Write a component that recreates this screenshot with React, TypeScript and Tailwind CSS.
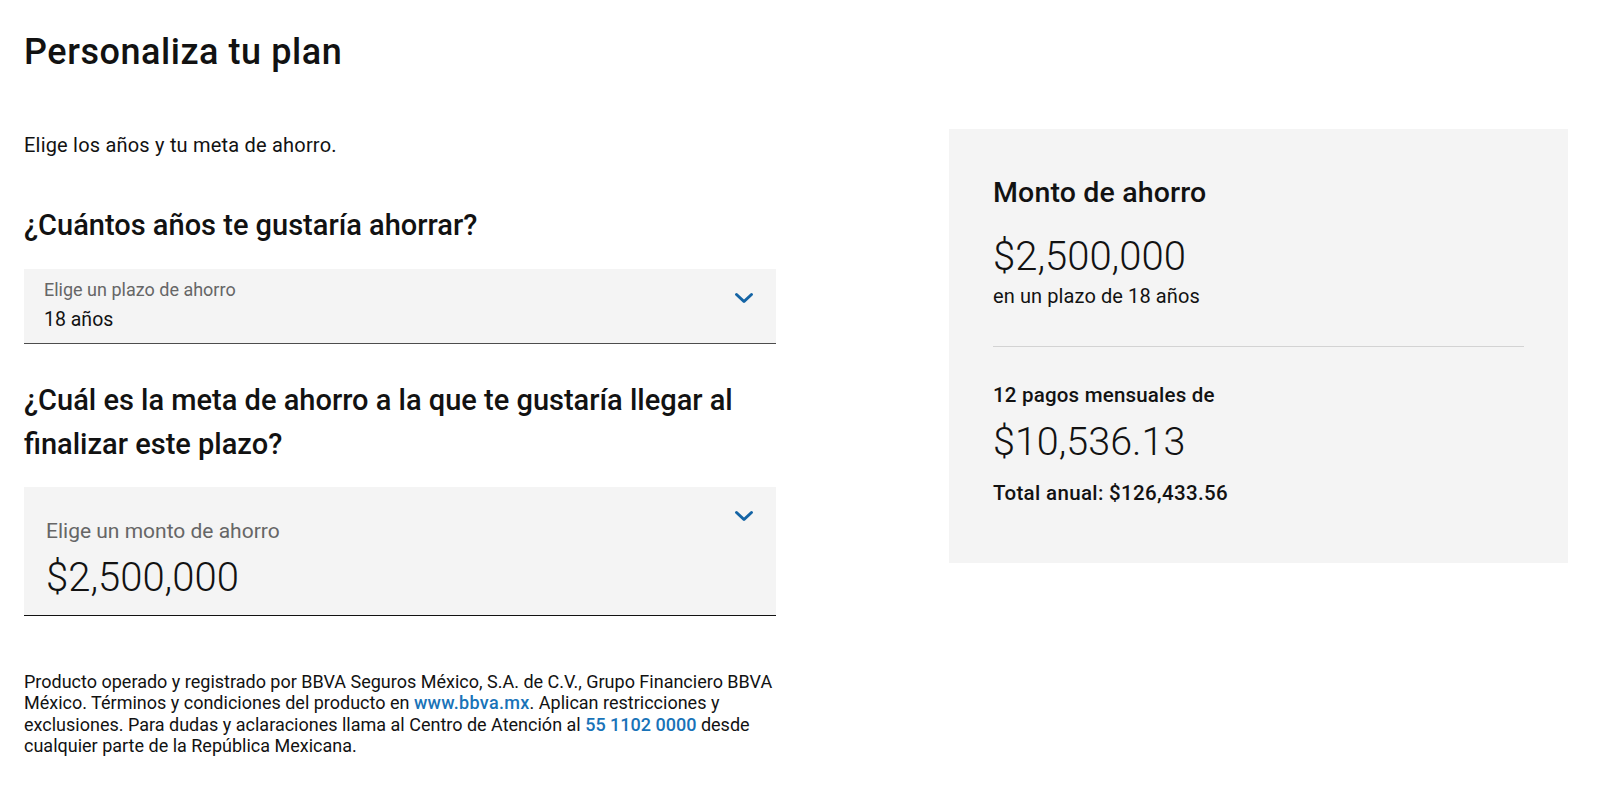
import React from "react";

function Chevron() {
  return (
    <svg width="20" height="12" viewBox="0 0 20 12" fill="none" className="mt-[23px] shrink-0">
      <path d="M2.5 2.5 L10 9.5 L17.5 2.5" stroke="#1464a5" strokeWidth="3" strokeLinecap="round" strokeLinejoin="round" />
    </svg>
  );
}

export default function App() {
  return (
    <div className="w-[1600px] min-h-[794px] bg-white text-[#121212] font-['Roboto','Liberation_Sans',sans-serif]">
      <div className="pl-6 pt-[30px]">
        <h1 className="text-[36px] leading-[44px] font-medium tracking-[0.55px]">Personaliza tu plan</h1>
      </div>

      <div className="mt-[55px] flex pl-6 pr-8 gap-[173px] items-start">
        {/* Left column */}
        <div className="w-[752px] pt-1">
          <p className="text-[20px] leading-[24px] tracking-[0.2px]">Elige los años y tu meta de ahorro.</p>

          <h2 className="mt-[50px] text-[29px] leading-[36px] font-medium">¿Cuántos años te gustaría ahorrar?</h2>

          <div className="mt-[26px] flex justify-between bg-[#f4f4f4] border-b border-[#4d4d4d] pl-5 pr-[22px]">
            <div className="pt-[10px] pb-[11px]">
              <div className="text-[18px] leading-[22px] text-[#666666]">Elige un plazo de ahorro</div>
              <div className="mt-[7px] text-[19.5px] leading-[24px]">18 años</div>
            </div>
            <Chevron />
          </div>

          <h2 className="mt-[34px] text-[29px] leading-[44px] font-medium">
            ¿Cuál es la meta de ahorro a la que te gustaría llegar al finalizar este plazo?
          </h2>

          <div className="mt-[21px] flex justify-between bg-[#f4f4f4] border-b border-[#121212] pl-[22px] pr-[22px]">
            <div className="pt-[32px] pb-[14px]">
              <div className="text-[21px] leading-[24px] text-[#666666]">Elige un monto de ahorro</div>
              <div className="mt-[12px] text-[40px] leading-[46px] font-light">$2,500,000</div>
            </div>
            <Chevron />
          </div>

          <p className="mt-[55px] text-[18px] leading-[21.33px] whitespace-nowrap">
            Producto operado y registrado por BBVA Seguros México, S.A. de C.V., Grupo Financiero BBVA
            <br />
            México. Términos y condiciones del producto en{" "}
            <a className="text-[#1973b8] font-medium tracking-[0.3px]">www.bbva.mx</a>. Aplican restricciones y
            <br />
            exclusiones. Para dudas y aclaraciones llama al Centro de Atención al{" "}
            <a className="text-[#1973b8] font-medium">55 1102 0000</a> desde
            <br />
            cualquier parte de la República Mexicana.
          </p>
        </div>

        {/* Right card */}
        <div className="w-[619px] bg-[#f4f4f4] px-11 pt-[47px] pb-[58px]">
          <div className="text-[28.5px] leading-[34px] font-medium tracking-[0.15px]">Monto de ahorro</div>
          <div className="mt-[24px] text-[40px] leading-[46px] font-light">$2,500,000</div>
          <div className="mt-[4px] text-[20px] leading-[24px] tracking-[0.1px]">en un plazo de 18 años</div>
          <div className="mt-[38px] h-px bg-[#d3d3d3]" />
          <div className="mt-[36px] text-[20.5px] leading-[24px] font-medium tracking-[0.2px]">12 pagos mensuales de</div>
          <div className="mt-[12px] text-[39.5px] leading-[46px] font-light">$10,536.13</div>
          <div className="mt-[16px] text-[20.5px] leading-[24px] font-medium tracking-[0.35px]">Total anual: $126,433.56</div>
        </div>
      </div>
    </div>
  );
}
